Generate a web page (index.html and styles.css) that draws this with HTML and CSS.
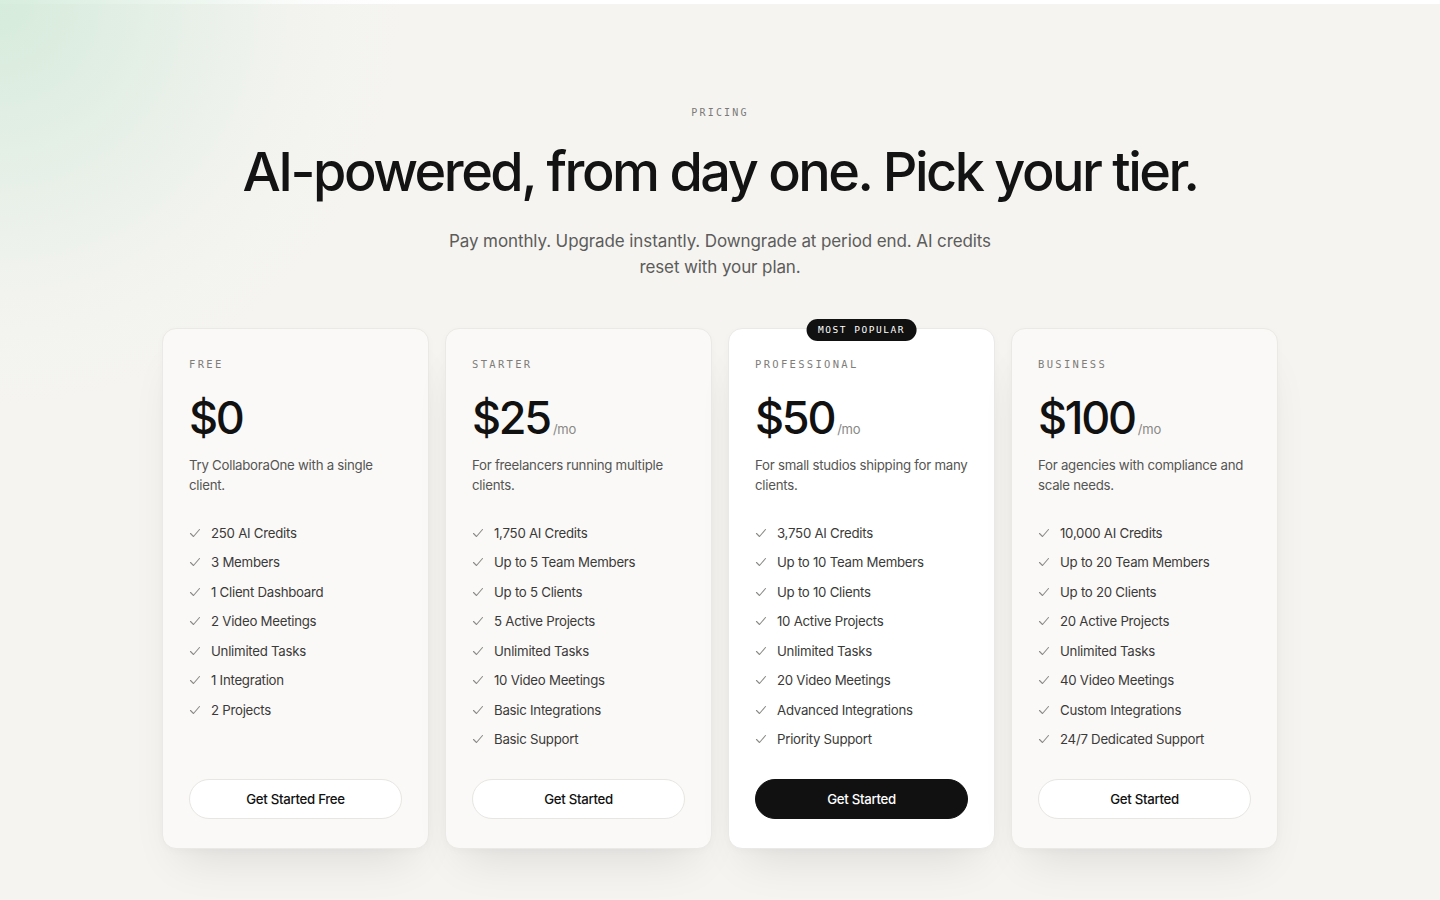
FILE: index.html
```html
<!DOCTYPE html>
<html lang="en">
<head>
<meta charset="utf-8">
<title>Pricing</title>
<link rel="stylesheet" href="styles.css">
</head>
<body>
<div class="topbar"></div>
<main class="pricing">
  <div class="glow"></div>
  <p class="eyebrow">PRICING</p>
  <h1 class="title">AI-powered, from day one. Pick your tier.</h1>
  <p class="subtitle">Pay monthly. Upgrade instantly. Downgrade at period end. AI credits reset with your plan.</p>

  <div class="plans">
    <section class="card">
      <p class="tier">FREE</p>
      <div class="price"><span class="amount">$0</span></div>
      <p class="desc">Try CollaboraOne with a single client.</p>
      <ul class="features">
        <li><svg class="check" viewBox="0 0 12 12"><path d="M1.5 6.5 4.5 9.5 10.5 2.5"/></svg>250 AI Credits</li>
        <li><svg class="check" viewBox="0 0 12 12"><path d="M1.5 6.5 4.5 9.5 10.5 2.5"/></svg>3 Members</li>
        <li><svg class="check" viewBox="0 0 12 12"><path d="M1.5 6.5 4.5 9.5 10.5 2.5"/></svg>1 Client Dashboard</li>
        <li><svg class="check" viewBox="0 0 12 12"><path d="M1.5 6.5 4.5 9.5 10.5 2.5"/></svg>2 Video Meetings</li>
        <li><svg class="check" viewBox="0 0 12 12"><path d="M1.5 6.5 4.5 9.5 10.5 2.5"/></svg>Unlimited Tasks</li>
        <li><svg class="check" viewBox="0 0 12 12"><path d="M1.5 6.5 4.5 9.5 10.5 2.5"/></svg>1 Integration</li>
        <li><svg class="check" viewBox="0 0 12 12"><path d="M1.5 6.5 4.5 9.5 10.5 2.5"/></svg>2 Projects</li>
      </ul>
      <button class="btn">Get Started Free</button>
    </section>

    <section class="card">
      <p class="tier">STARTER</p>
      <div class="price"><span class="amount">$25</span><span class="per">/mo</span></div>
      <p class="desc">For freelancers running multiple clients.</p>
      <ul class="features">
        <li><svg class="check" viewBox="0 0 12 12"><path d="M1.5 6.5 4.5 9.5 10.5 2.5"/></svg>1,750 AI Credits</li>
        <li><svg class="check" viewBox="0 0 12 12"><path d="M1.5 6.5 4.5 9.5 10.5 2.5"/></svg>Up to 5 Team Members</li>
        <li><svg class="check" viewBox="0 0 12 12"><path d="M1.5 6.5 4.5 9.5 10.5 2.5"/></svg>Up to 5 Clients</li>
        <li><svg class="check" viewBox="0 0 12 12"><path d="M1.5 6.5 4.5 9.5 10.5 2.5"/></svg>5 Active Projects</li>
        <li><svg class="check" viewBox="0 0 12 12"><path d="M1.5 6.5 4.5 9.5 10.5 2.5"/></svg>Unlimited Tasks</li>
        <li><svg class="check" viewBox="0 0 12 12"><path d="M1.5 6.5 4.5 9.5 10.5 2.5"/></svg>10 Video Meetings</li>
        <li><svg class="check" viewBox="0 0 12 12"><path d="M1.5 6.5 4.5 9.5 10.5 2.5"/></svg>Basic Integrations</li>
        <li><svg class="check" viewBox="0 0 12 12"><path d="M1.5 6.5 4.5 9.5 10.5 2.5"/></svg>Basic Support</li>
      </ul>
      <button class="btn">Get Started</button>
    </section>

    <section class="card card-featured">
      <span class="badge">MOST POPULAR</span>
      <p class="tier">PROFESSIONAL</p>
      <div class="price"><span class="amount">$50</span><span class="per">/mo</span></div>
      <p class="desc">For small studios shipping for many clients.</p>
      <ul class="features">
        <li><svg class="check" viewBox="0 0 12 12"><path d="M1.5 6.5 4.5 9.5 10.5 2.5"/></svg>3,750 AI Credits</li>
        <li><svg class="check" viewBox="0 0 12 12"><path d="M1.5 6.5 4.5 9.5 10.5 2.5"/></svg>Up to 10 Team Members</li>
        <li><svg class="check" viewBox="0 0 12 12"><path d="M1.5 6.5 4.5 9.5 10.5 2.5"/></svg>Up to 10 Clients</li>
        <li><svg class="check" viewBox="0 0 12 12"><path d="M1.5 6.5 4.5 9.5 10.5 2.5"/></svg>10 Active Projects</li>
        <li><svg class="check" viewBox="0 0 12 12"><path d="M1.5 6.5 4.5 9.5 10.5 2.5"/></svg>Unlimited Tasks</li>
        <li><svg class="check" viewBox="0 0 12 12"><path d="M1.5 6.5 4.5 9.5 10.5 2.5"/></svg>20 Video Meetings</li>
        <li><svg class="check" viewBox="0 0 12 12"><path d="M1.5 6.5 4.5 9.5 10.5 2.5"/></svg>Advanced Integrations</li>
        <li><svg class="check" viewBox="0 0 12 12"><path d="M1.5 6.5 4.5 9.5 10.5 2.5"/></svg>Priority Support</li>
      </ul>
      <button class="btn btn-dark">Get Started</button>
    </section>

    <section class="card">
      <p class="tier">BUSINESS</p>
      <div class="price"><span class="amount">$100</span><span class="per">/mo</span></div>
      <p class="desc">For agencies with compliance and scale needs.</p>
      <ul class="features">
        <li><svg class="check" viewBox="0 0 12 12"><path d="M1.5 6.5 4.5 9.5 10.5 2.5"/></svg>10,000 AI Credits</li>
        <li><svg class="check" viewBox="0 0 12 12"><path d="M1.5 6.5 4.5 9.5 10.5 2.5"/></svg>Up to 20 Team Members</li>
        <li><svg class="check" viewBox="0 0 12 12"><path d="M1.5 6.5 4.5 9.5 10.5 2.5"/></svg>Up to 20 Clients</li>
        <li><svg class="check" viewBox="0 0 12 12"><path d="M1.5 6.5 4.5 9.5 10.5 2.5"/></svg>20 Active Projects</li>
        <li><svg class="check" viewBox="0 0 12 12"><path d="M1.5 6.5 4.5 9.5 10.5 2.5"/></svg>Unlimited Tasks</li>
        <li><svg class="check" viewBox="0 0 12 12"><path d="M1.5 6.5 4.5 9.5 10.5 2.5"/></svg>40 Video Meetings</li>
        <li><svg class="check" viewBox="0 0 12 12"><path d="M1.5 6.5 4.5 9.5 10.5 2.5"/></svg>Custom Integrations</li>
        <li><svg class="check" viewBox="0 0 12 12"><path d="M1.5 6.5 4.5 9.5 10.5 2.5"/></svg>24/7 Dedicated Support</li>
      </ul>
      <button class="btn">Get Started</button>
    </section>
  </div>
</main>
</body>
</html>
```

FILE: styles.css
```css
* { box-sizing: border-box; }

html, body {
  margin: 0;
  padding: 0;
}

body {
  background: #f5f4f1;
  font-family: Inter, "Noto Sans", sans-serif;
  color: #111;
  min-height: 900px;
  overflow: hidden;
}

.topbar {
  height: 4px;
  background: #ffffff;
}

.pricing {
  position: relative;
  display: flex;
  flex-direction: column;
  align-items: center;
  padding: 101px 0 60px;
}

.glow {
  position: absolute;
  left: -400px;
  top: -400px;
  width: 800px;
  height: 800px;
  border-radius: 50%;
  background: radial-gradient(circle, rgba(208, 234, 216, 0.85) 0%, rgba(218, 236, 223, 0.55) 30%, rgba(232, 240, 233, 0.22) 52%, rgba(245, 244, 241, 0) 72%);
  pointer-events: none;
}

.eyebrow {
  position: relative;
  margin: 0;
  font-family: "DejaVu Sans Mono", "Liberation Mono", monospace;
  font-size: 10px;
  line-height: 16px;
  letter-spacing: 0.22em;
  color: #7a7a78;
}

.title {
  position: relative;
  margin: 20px 0 0;
  font-size: 54px;
  line-height: 62px;
  font-weight: 500;
  letter-spacing: -0.046em;
  color: #131313;
}

.subtitle {
  position: relative;
  margin: 25px 0 0;
  max-width: 570px;
  text-align: center;
  font-size: 17px;
  line-height: 26px;
  letter-spacing: -0.006em;
  color: #5c5c5a;
}

.plans {
  position: relative;
  margin-top: 48px;
  display: grid;
  grid-template-columns: repeat(4, 267px);
  gap: 16px;
}

.card {
  position: relative;
  display: flex;
  flex-direction: column;
  padding: 27px 26px 29px;
  background: #faf9f7;
  border: 1px solid #ebe9e5;
  border-radius: 14px;
  box-shadow: 0 26px 44px -18px rgba(0, 0, 0, 0.11), 0 2px 8px rgba(0, 0, 0, 0.025);
}

.card-featured {
  background: #ffffff;
}

.badge {
  position: absolute;
  top: -10px;
  left: 50%;
  transform: translateX(-50%);
  height: 22px;
  padding: 0 12px;
  border-radius: 999px;
  background: #111;
  color: #fff;
  font-family: "DejaVu Sans Mono", "Liberation Mono", monospace;
  font-size: 9.5px;
  line-height: 22px;
  letter-spacing: 0.16em;
  white-space: nowrap;
}

.tier {
  margin: 0;
  font-family: "DejaVu Sans Mono", "Liberation Mono", monospace;
  font-size: 10.5px;
  line-height: 16px;
  letter-spacing: 0.22em;
  color: #7d7d7a;
}

.price {
  margin-top: 23px;
  display: flex;
  align-items: baseline;
  height: 48px;
}

.amount {
  font-size: 45px;
  line-height: 46px;
  font-weight: 500;
  letter-spacing: -0.05em;
  color: #111;
}

.per {
  margin-left: 3px;
  font-size: 13px;
  letter-spacing: -0.02em;
  color: #888885;
}

.desc {
  margin: 12px 0 0;
  font-size: 13.25px;
  line-height: 20px;
  letter-spacing: -0.02em;
  color: #555553;
}

.features {
  list-style: none;
  margin: 28px 0 30px;
  padding: 0;
  display: flex;
  flex-direction: column;
  gap: 9.45px;
}

.features li {
  display: flex;
  align-items: center;
  gap: 10px;
  font-size: 13.25px;
  line-height: 20px;
  letter-spacing: -0.02em;
  color: #3a3a38;
}

.check {
  width: 12px;
  height: 12px;
  flex: none;
  fill: none;
  stroke: #8a8a87;
  stroke-width: 1.1;
  stroke-linecap: round;
  stroke-linejoin: round;
}

.btn {
  margin-top: auto;
  height: 40px;
  width: 100%;
  border-radius: 999px;
  border: 1px solid #e8e6e2;
  background: #fff;
  font-family: Inter, "Noto Sans", sans-serif;
  font-size: 13.25px;
  font-weight: 500;
  letter-spacing: -0.023em;
  color: #111;
  cursor: pointer;
}

.btn-dark {
  background: #111;
  border-color: #111;
  color: #fff;
}
```
